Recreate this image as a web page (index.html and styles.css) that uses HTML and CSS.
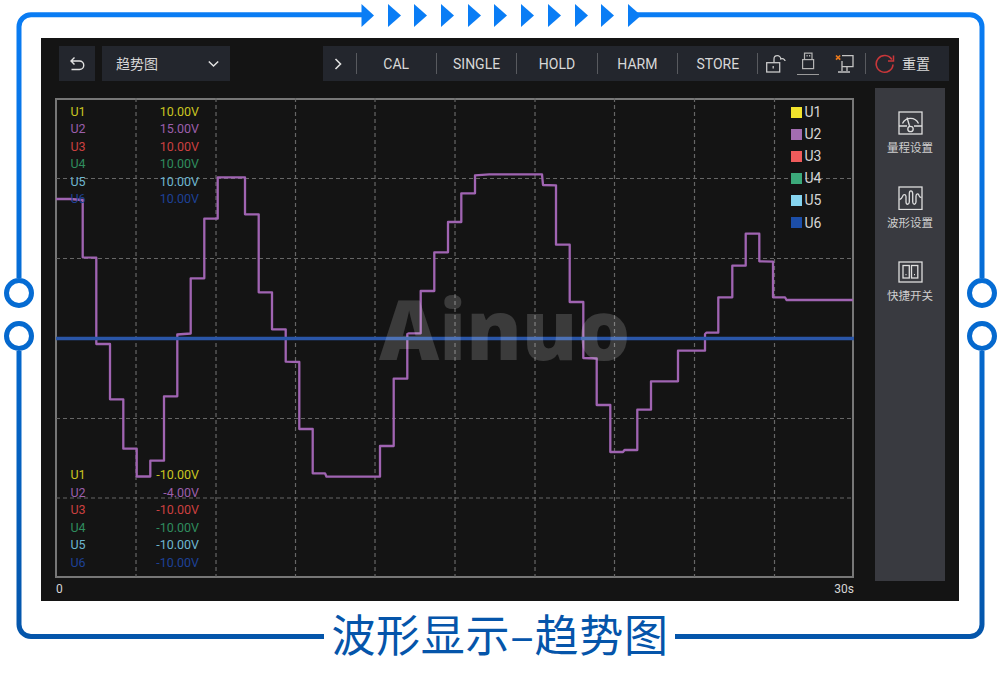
FILE: index.html
```html
<!DOCTYPE html>
<html lang="zh">
<head>
<meta charset="utf-8">
<title>波形显示-趋势图</title>
<link rel="stylesheet" href="styles.css">
</head>
<body>
<div class="stage">
  <svg class="frame" viewBox="0 0 1000 675" aria-hidden="true">
    <defs>
      <linearGradient id="fg" gradientUnits="userSpaceOnUse" x1="0" y1="0" x2="0" y2="675">
        <stop offset="0" stop-color="#0a7df5"/>
        <stop offset="0.45" stop-color="#056bd2"/>
        <stop offset="1" stop-color="#0453a6"/>
      </linearGradient>
    </defs>
    <g fill="none" stroke="url(#fg)" stroke-width="5">
      <path d="M364 14.800H31a12 12 0 0 0-12 12V278"/>
      <circle cx="19" cy="293" r="12.500"/>
      <circle cx="19" cy="336" r="12.500"/>
      <path d="M19 351V624.500a12 12 0 0 0 12 12H324"/>
      <path d="M636 14.800H970a12 12 0 0 1 12 12V278"/>
      <circle cx="982" cy="293" r="12.500"/>
      <circle cx="982" cy="336" r="12.500"/>
      <path d="M982 351V624.500a12 12 0 0 1-12 12H675"/>
    </g>
    <g fill="#0a7df5">
      <polygon points="361.500,4 374,15.500 361.500,27"/>
      <polygon points="388,4 401,15.500 388,27"/>
      <polygon points="414,4 427,15.500 414,27"/>
      <polygon points="441,4 454,15.500 441,27"/>
      <polygon points="468,4 481,15.500 468,27"/>
      <polygon points="494,4 507,15.500 494,27"/>
      <polygon points="521,4 534,15.500 521,27"/>
      <polygon points="548,4 561,15.500 548,27"/>
      <polygon points="575,4 588,15.500 575,27"/>
      <polygon points="601,4 614,15.500 601,27"/>
      <polygon points="628,4 641,15.500 628,27"/>
    </g>
  </svg>

  <div class="screen">
    <div class="toolbar">
      <div class="tb-back">
        <svg class="ico" width="16" height="16" viewBox="0 0 16 16"><path d="M5.500 1.500L2 5l3.500 3.500M2 5h8.500a3.800 3.800 0 0 1 0 8.500H2.500" fill="none" stroke="#e2e2e2" stroke-width="1.400"/></svg>
      </div>
      <div class="tb-select">
        <span>趋势图</span>
        <svg class="ico" width="11" height="8" viewBox="0 0 11 8"><path d="M.8 1.500L5.500 6l4.700-4.500" fill="none" stroke="#e2e2e2" stroke-width="1.500"/></svg>
      </div>
      <div class="tb-bar">
        <div class="tb-arrow">
          <svg class="ico" width="9" height="12" viewBox="0 0 9 12"><path d="M1.500 1l5 5-5 5" fill="none" stroke="#e2e2e2" stroke-width="1.600"/></svg>
        </div>
        <div class="tb-cell">CAL</div>
        <div class="tb-cell">SINGLE</div>
        <div class="tb-cell">HOLD</div>
        <div class="tb-cell">HARM</div>
        <div class="tb-cell">STORE</div>
        <div class="tb-icons">
          <svg class="ico" width="20" height="20" viewBox="0 0 20 20"><g fill="none" stroke="#c9c9c9" stroke-width="1.300"><rect x="0.700" y="8.700" width="13" height="9.300"/><path d="M8 8.500V5.200a3.400 3.400 0 0 1 6.800-.2a3 3 0 0 1 4.200 1.800V7"/><path d="M7.200 12v2.500"/></g></svg>
          <div class="usb">
            <svg class="ico" width="14" height="18" viewBox="0 0 14 18"><g fill="none" stroke="#b4b4b4" stroke-width="1.200"><rect x="1.600" y="7.600" width="11" height="9"/><path d="M3.500 7.500V1.200h7.500v6.300"/></g><path d="M5.500 3h1.200v1.400H5.500zM8 3h1.200v1.400H8z" fill="#b4b4b4"/></svg>
          </div>
          <svg class="ico" width="19" height="20" viewBox="0 0 19 20"><g fill="none" stroke="#c4c4c4" stroke-width="1.300"><path d="M7 1.700h11v11H7M7 7v10M12 13v4M3 18h12"/></g><path d="M1 1.500l4.200 4.200M5.200 1.500L1 5.700" stroke="#e8791c" stroke-width="1.700"/></svg>
        </div>
        <div class="tb-reset">
          <svg class="ico" width="20" height="20" viewBox="0 0 20 20"><path d="M16.800 5.500A8.400 8.400 0 1 0 18 10.500" fill="none" stroke="#c9373a" stroke-width="1.600"/><path d="M18.500 1.500V7H13" fill="none" stroke="#c9373a" stroke-width="1.500"/></svg>
          <span>重置</span>
        </div>
      </div>
    </div>

    <div class="main">
      <div class="chart">
        <div class="plot">
          <svg class="plot-svg" viewBox="55 98 799 480" aria-hidden="true">
            <g class="grid">
              <path d="M136 98V577M216 98V577M295.500 98V577M375 98V577M455 98V577M535 98V577M614.500 98V577M694.500 98V577M774.500 98V577"/>
              <path d="M56 178.500H854M56 258.500H854M56 418.500H854M56 498H854"/>
            </g>
            <polyline class="trace" points="56,199 70,199 82.700,200 82.700,257.300 96.300,257.700 96.300,344 110,344 110,399.300 123.300,399.300 123.300,448.700 136.700,448.700 136.700,476.500 150.300,476.500 150.300,460.700 164,460.700 164,396.300 177.300,396.300 177.300,334.500 190.700,333.500 190.700,278.300 204.300,278.300 204.300,218.700 217.700,218.700 217.700,177.300 245,177.300 245,214.300 258.700,214.300 258.700,292.300 272,292.300 272,329.300 285.700,329.300 285.700,361.700 299.300,362 299.300,429 312.700,429 312.700,473.300 325,473.300 326.500,476.700 380,476.700 380,446 393.700,446 393.700,378.700 407.300,378.700 407.300,334 409,333.300 420.700,333.300 420.700,291 434.300,291 434.300,252.300 448,252.300 448,222 461.300,222 461.300,193.300 475,193.300 475,175.300 489.300,174.300 542,174.300 543,185 556,185.300 556,244.700 569.700,244.700 569.700,302 583.300,302 583.300,358 596.700,358.500 596.700,405 610.300,405 610.300,452 623,452 624.500,450 637.300,450 637.300,409.700 651,409.700 651,381.300 678,381.300 678,350.700 705,350.700 705,334 706.500,332.700 718.300,332.700 718.300,297.300 732.300,297.300 732.300,265.700 745.700,265.700 745.700,233.700 759.300,233.700 759.300,261.300 773,261.700 773,297.300 785,297.300 786.500,300 853,300"/>
            <path class="u6" d="M56 338.500H854"/>
          </svg>
          <div class="watermark">Ainuo</div>
          <div class="readouts">
            <div class="group">
              <div class="row c1"><span>U1</span><span>10.00V</span></div>
              <div class="row c2"><span>U2</span><span>15.00V</span></div>
              <div class="row c3"><span>U3</span><span>10.00V</span></div>
              <div class="row c4"><span>U4</span><span>10.00V</span></div>
              <div class="row c5"><span>U5</span><span>10.00V</span></div>
              <div class="row c6"><span>U6</span><span>10.00V</span></div>
            </div>
            <div class="group">
              <div class="row c1"><span>U1</span><span>-10.00V</span></div>
              <div class="row c2"><span>U2</span><span>-4.00V</span></div>
              <div class="row c3"><span>U3</span><span>-10.00V</span></div>
              <div class="row c4"><span>U4</span><span>-10.00V</span></div>
              <div class="row c5"><span>U5</span><span>-10.00V</span></div>
              <div class="row c6"><span>U6</span><span>-10.00V</span></div>
            </div>
          </div>
          <div class="legend">
            <div class="lg"><i class="sw s1"></i>U1</div>
            <div class="lg"><i class="sw s2"></i>U2</div>
            <div class="lg"><i class="sw s3"></i>U3</div>
            <div class="lg"><i class="sw s4"></i>U4</div>
            <div class="lg"><i class="sw s5"></i>U5</div>
            <div class="lg"><i class="sw s6"></i>U6</div>
          </div>
        </div>
        <div class="axis"><span>0</span><span>30s</span></div>
      </div>

      <div class="side">
        <div class="side-item">
          <svg class="ico" width="25" height="24" viewBox="0 0 25 24"><g fill="none" stroke="#dedede" stroke-width="1.300"><rect x="1" y="1" width="23" height="22"/><path d="M1 15h8M16 15h8"/><path d="M4.500 12.500a8.800 8.800 0 0 1 16 0"/><circle cx="12.500" cy="18" r="2.700"/><path d="M11.500 15L9 6.500"/></g></svg>
          <span>量程设置</span>
        </div>
        <div class="side-item">
          <svg class="ico" width="25" height="24" viewBox="0 0 25 24"><g fill="none" stroke="#dedede" stroke-width="1.300"><rect x="1" y="1" width="23" height="22.500"/><path d="M1.500 13.500c2-.5 2.300-1 3-3 .8-2.500 3.200-2.500 3.500 0V16c.2 3 3 3 3.300 0V7.500c.2-3.500 3-3.500 3.400 0V16c.3 3 3 3 3.300 0V10c.2-2.500 2.500-2.800 3-.5.400 1.500 1 2 2.500 2"/></g></svg>
          <span>波形设置</span>
        </div>
        <div class="side-item">
          <svg class="ico" width="25" height="22" viewBox="0 0 25 22"><g fill="none" stroke="#dedede" stroke-width="1.300"><rect x="1" y="1" width="23" height="20"/><rect x="5" y="4.500" width="6.300" height="12.500"/><rect x="13.500" y="4.500" width="6.300" height="12.500"/></g><path d="M7.500 13h1v1.200h-1zM16 13h1v1.200h-1z" fill="#dedede"/></svg>
          <span>快捷开关</span>
        </div>
      </div>
    </div>
  </div>

  <div class="caption">波形显示–趋势图</div>
</div>
</body>
</html>
```

FILE: styles.css
```css
* { box-sizing: border-box; }
html, body { margin: 0; padding: 0; background: #fff; }
body { font-family: Roboto, "Noto Sans CJK SC", sans-serif; }

.stage {
  position: relative;
  width: 1000px;
  height: 675px;
  padding: 38px 0 0 41px;
  overflow: hidden;
}
.frame { position: absolute; left: 0; top: 0; width: 1000px; height: 675px; }
.ico { display: block; flex: none; }

.screen {
  position: relative;
  width: 918px;
  height: 563px;
  padding: 8px 10px 0 18px;
  background: #141414;
  color: #d6d6d6;
}

.toolbar { display: flex; height: 35px; gap: 7px; font-size: 14px; }
.tb-back, .tb-select, .tb-bar { background: #23262d; }
.tb-back { width: 36px; display: flex; align-items: center; justify-content: center; }
.tb-select {
  width: 128px;
  padding: 0 11px 0 14px;
  display: flex;
  align-items: center;
  justify-content: space-between;
  font-family: "Noto Sans CJK SC", sans-serif;
}
.tb-select span { margin-top: -2px; }
.tb-bar {
  margin-left: auto;
  width: 626px;
  display: flex;
  align-items: center;
}
.tb-arrow { width: 33.500px; padding-left: 11px; }
.tb-arrow, .tb-cell, .tb-icons { height: 21px; border-right: 1px solid #585a5f; display: flex; align-items: center; }
.tb-cell { width: 80.400px; justify-content: center; color: #d8d8d8; }
.tb-icons { width: 107.500px; padding-left: 8px; }
.usb { margin: -1px 16px 0 11px; width: 22px; height: 23px; border-bottom: 1px solid #9a9a9a; display: flex; justify-content: center; align-self: flex-start; }
.tb-reset {
  display: flex;
  align-items: center;
  gap: 7px;
  padding-left: 9px;
  font-family: "Noto Sans CJK SC", sans-serif;
  color: #d8d8d8;
}
.tb-reset span { margin-top: -2px; }

.main { display: flex; margin-top: 7px; }
.chart { width: 799px; margin: 10px 21px 0 -4px; }
.plot {
  position: relative;
  height: 480px;
  display: flex;
  justify-content: space-between;
  border: 2px solid #777;
  padding: 2.500px 0 4.500px 13.500px;
  font-size: 12.500px;
}
.plot-svg { position: absolute; left: -2px; top: -2px; width: 799px; height: 480px; }
.grid path { fill: none; stroke: #666; stroke-width: 1.200; stroke-dasharray: 4 3; }
.trace { fill: none; stroke: #a064b2; stroke-width: 2.300; stroke-linejoin: round; }
.u6 { fill: none; stroke: #2a56a8; stroke-width: 3.300; }
.watermark {
  position: absolute;
  left: 322px;
  top: 186px;
  font: 800 83px/1 "Open Sans", sans-serif;
  color: rgba(255, 255, 255, 0.17);
}

.readouts { position: relative; display: flex; flex-direction: column; justify-content: space-between; width: 128.500px; }
.row { display: flex; justify-content: space-between; height: 17.600px; line-height: 17.600px; }
.c1 { color: #c9c421; }
.c2 { color: #9c5fac; }
.c3 { color: #cb4040; }
.c4 { color: #2f8c5e; }
.c5 { color: #6db6d0; }
.c6 { color: #1d4197; }

.legend { position: relative; width: 61.500px; margin-top: -1.500px; font-size: 14px; color: #d6d6d6; }
.lg { display: flex; align-items: center; gap: 3px; height: 22.100px; }
.sw { width: 11px; height: 11px; flex: none; }
.s1 { background: #f2e32c; }
.s2 { background: #a36db1; }
.s3 { background: #ef5b5b; }
.s4 { background: #3ba97a; }
.s5 { background: #86d4ef; }
.s6 { background: #1c4ea8; }

.axis { display: flex; justify-content: space-between; margin-top: 4px; padding-left: 1px; font-size: 12px; line-height: 14px; color: #d6d6d6; }

.side {
  width: 70px;
  height: 493px;
  background: #393a40;
  padding-top: 23px;
  display: flex;
  flex-direction: column;
  align-items: center;
  font-family: "Noto Sans CJK SC", sans-serif;
  font-size: 11.500px;
  color: #cfcfcf;
}
.side-item { height: 75px; display: flex; flex-direction: column; align-items: center; gap: 4px; line-height: 16px; }

.caption {
  margin: 2px 0 0 -41px;
  height: 60px;
  text-align: center;
  font: 400 44px/60px "Noto Sans CJK SC", sans-serif;
  letter-spacing: 0.700px;
  color: #0555aa;
}
```
